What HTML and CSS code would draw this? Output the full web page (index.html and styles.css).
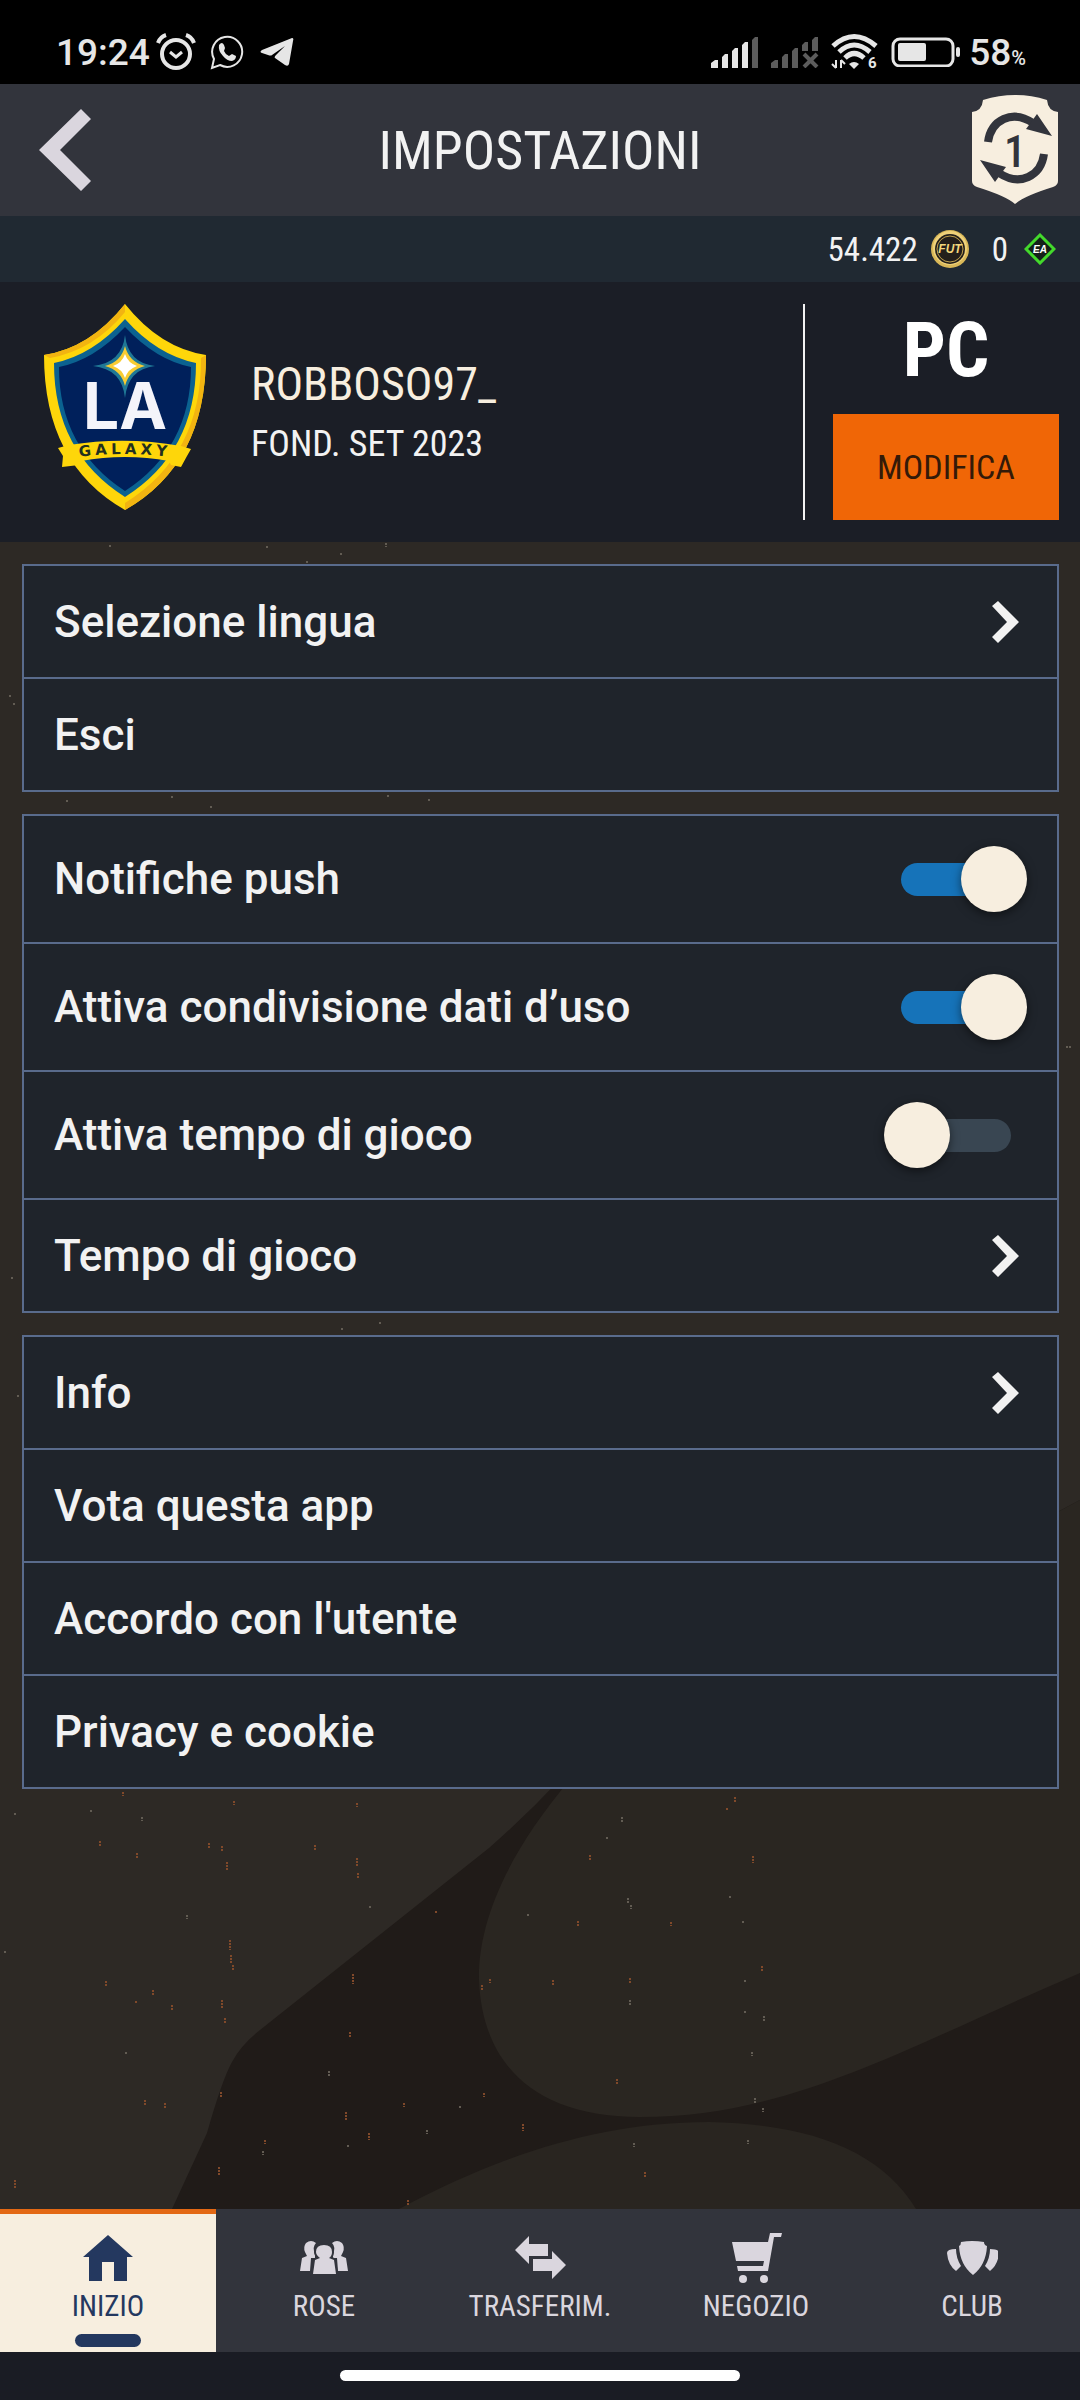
FILE: index.html
```html
<!DOCTYPE html>
<html lang="it">
<head>
  <meta charset="UTF-8">
  <meta name="viewport" content="width=device-width, initial-scale=1">
  <title>Impostazioni</title>
  <link rel="stylesheet" href="styles.css">
</head>
<body>
  <div class="statusbar">
    <span class="time">19:24</span>
    <svg class="st-alarm" width="40" height="38" viewBox="0 0 40 38" fill="none" stroke="#e6e6e6">
      <circle cx="20" cy="21" r="14" stroke-width="4"/>
      <path d="M14 19l6 5 6-5" stroke-width="3"/>
      <path d="M2 10Q4 4 10 2M38 10Q36 4 30 2" stroke-width="4"/>
    </svg>
    <svg class="st-whatsapp" width="34" height="36" viewBox="0 0 34 36">
      <path d="M2 34l2-9A15 15 0 1 1 10 31z" fill="none" stroke="#e6e6e6" stroke-width="2"/>
      <path d="M9 11q3-4 5 0l1 3-1 3q1 3 5 5l3-2 4 2q0 4-4 5-5 0-9-5-5-5-4-11z" fill="#e6e6e6"/>
    </svg>
    <svg class="st-telegram" width="34" height="30" viewBox="0 0 34 30">
      <path d="M2 13L32 1q2 0 1 3l-4 23q-1 3-4 1L15 21q-1-1 1-3l9-9-13 9q-1 1-4 0l-6-2q-3-1 0-3z" fill="#e6e6e6"/>
    </svg>
    <div class="status-right">
      <svg class="st-signal" width="48" height="32" viewBox="0 0 48 32" fill="#e6e6e6">
        <path d="M0 32v-5l4-3h3v8zM11 32V21l3-3h3v14zM21 32V15l3-3h3v20zM31 32V9l3-3h3v26z"/>
        <path d="M41 32V4l3-3h3v31z" fill="#5c5c5c"/>
      </svg>
      <svg class="st-signal2" width="48" height="32" viewBox="0 0 48 32" fill="#5c5c5c">
        <path d="M0 32v-5l4-3h3v8zM11 32V21l3-3h3v14zM21 32V15l3-3h3v20zM31 15V9l3-3h3v9zM41 15V4l3-3h3v14z"/>
        <path d="M33 18l13 13M46 18L33 31" stroke="#5c5c5c" stroke-width="4"/>
      </svg>
      <svg class="st-wifi" width="48" height="40" viewBox="0 -2 48 40">
        <g fill="none" stroke="#e6e6e6" stroke-width="5">
          <path d="M2 12Q23-7 45 12"/>
          <path d="M8 18Q23 4 39 18"/>
          <path d="M14 24Q23 15 33 24"/>
        </g>
        <path d="M18 30q5-4 10 0l-5 5z" fill="#e6e6e6"/>
        <path d="M5 26v8M1 30l4 4M10 34v-8M14 30l-4-4" stroke="#e6e6e6" stroke-width="2" fill="none"/>
        <text class="wifi-num" x="37" y="34">6</text>
      </svg>
      <svg class="st-battery" width="70" height="30" viewBox="0 0 70 30">
        <rect x="2" y="2" width="60" height="27" rx="7" fill="none" stroke="#e6e6e6" stroke-width="3"/>
        <rect x="7" y="6" width="28" height="18" rx="2" fill="#e6e6e6"/>
        <rect x="65" y="10" width="4" height="10" rx="2" fill="#e6e6e6"/>
      </svg>
      <span class="battery-text">58<small>%</small></span>
    </div>
  </div>

  <header class="topbar">
    <button class="icon-btn" type="button" aria-label="Indietro">
      <svg width="52" height="82" viewBox="0 0 52 82"><path d="M42 0l10 10-31 31 31 31-10 10L0 41z" fill="#dad6de"/></svg>
    </button>
    <h1>IMPOSTAZIONI</h1>
    <button class="icon-btn" type="button" aria-label="Rotazioni">
      <svg width="86" height="110" viewBox="0 0 86 110">
        <path d="M11 5Q43-5 75 5 76 16 86 17V86Q86 90 81 92 52 101 43 109 34 101 5 92 0 90 0 86V17Q10 16 11 5z" fill="#f7eedf"/>
        <g id="arrow">
          <path d="M16 47C19 25 40 14 61 28" fill="none" stroke="#32343c" stroke-width="8"/>
          <path d="M65 19l15 22-26-7 3-4z" fill="#32343c"/>
        </g>
        <use href="#arrow" transform="rotate(180 44 53)"/>
        <text class="badge-num" x="43" y="72">1</text>
      </svg>
    </button>
  </header>

  <div class="wallet">
    <span>54.422</span>
    <svg width="40" height="40" viewBox="0 0 40 40">
      <circle cx="20" cy="20" r="19" fill="#d9b858"/>
      <circle cx="20" cy="19" r="17" fill="#efd27a"/>
      <circle cx="20" cy="20" r="15" fill="#231f1b"/>
      <circle cx="20" cy="20" r="13" fill="none" stroke="#bfa04d" stroke-width="1"/>
      <text class="coin-text" x="20" y="24">FUT</text>
    </svg>
    <span class="points">0</span>
    <svg width="32" height="32" viewBox="0 0 32 32">
      <path d="M16 2l14 14-14 14L2 16z" fill="#14201a" stroke="#43d92c" stroke-width="3"/>
      <text class="points-text" x="16" y="20">EA</text>
    </svg>
  </div>

  <section class="profile">
    <svg class="crest" width="162" height="206" viewBox="0 0 162 206">
      <path d="M81 0Q116 44 162 51 162 160 81 206 0 160 0 51 46 44 81 0z" fill="#fed60a"/>
      <path d="M81 0Q46 44 0 51l6 3Q50 46 81 8zM162 51q0 109-81 155v-7q77-48 76-145z" fill="#f2b411"/>
      <path d="M81 15Q113 51 152 59 152 148 81 193 10 148 10 59 49 51 81 15z" fill="#0b6290"/>
      <path d="M81 23Q112 56 147 63 147 144 81 187 15 144 15 63 50 56 81 23z" fill="#00205b"/>
      <path d="M81 31Q84 59 111 62 84 65 81 94 78 65 49 62 78 59 81 31z" fill="#1f7896"/>
      <path d="M81 42Q85 58 101 62 85 66 81 82 77 66 61 62 77 58 81 42z" fill="#f8cc32"/>
      <path d="M81 50Q84 59 93 62 84 65 81 74 78 65 69 62 78 59 81 50z" fill="#fff"/>
      <text class="crest-la" x="81" y="125">LA</text>
      <path d="M25 141l-11 3 5 8-1 11 17-2 2-4q44-8 88 0l2 4 10 2 6-11 4-7-10-3q-56-10-112-1z" fill="#fed60a"/>
      <path id="ribbon" d="M20 155Q81 145 142 155" fill="none"/>
      <text class="crest-galaxy"><textPath href="#ribbon" startOffset="50%">GALAXY</textPath></text>
    </svg>
    <div class="who">
      <h2>ROBBOSO97_</h2>
      <p>FOND. SET 2023</p>
    </div>
    <div class="platform">
      <strong>PC</strong>
      <button class="edit" type="button">MODIFICA</button>
    </div>
  </section>

  <main>
    <svg class="backdrop" viewBox="0 542 1080 1667" preserveAspectRatio="xMidYMax slice" aria-hidden="true">
      <path fill="#201b18" d="M565 1774Q530 1812 489 1848L260 2030Q241 2045 232 2062 222 2080 207 2133L172 2209H1080V1500z"/>
      <path fill="#2a2621" d="M575 1774C500 1860 478 1930 479 1980 482 2060 530 2117 640 2117 790 2117 900 2050 1080 1973V1500z"/>
      <path fill="#292520" d="M399 2209C500 2155 600 2122 709 2122 810 2124 880 2150 916 2209z"/>
      <!-- paint specks -->
      <path class="specks warm" d="M123 1792v4M234 1801v4M357 1803v4M100 1841v6M137 1853v6M222 1846v5M227 1862v9M209 1843v5M315 1845v5M357 1858v8M358 1873v5M735 1797v6M727 1808v3M590 1855v6M753 1856v7M230 1940v10M231 1955v8M233 1965v6M106 1981v5M153 1990v5M172 2005v5M136 2001v3M353 1974v10M482 1985v6M490 1979v4M553 1980v5M630 1978v5M762 1966v5M222 2000v8M225 2018v6M350 2032v6M346 2112v8M369 2133v7M219 2167v9M221 2092v6M617 2079v5M645 2172v6M165 2103v6M145 2100v5M484 2093v4M523 2124v7M15 2180v8M408 2200v5M436 1911v3M578 1921v5M671 1922v4M265 2140v4M404 2103v4"/>
      <path class="specks pale" d="M15 1813v3M91 1810v3M142 1817v4M622 1817v5M607 1837v3M628 1898v5M631 1905v4M370 1906v3M187 1915v4M528 1914v3M743 1921v3M730 1896v3M630 2000v5M745 1980v3M764 2016v5M745 2011v3M329 2071v6M460 2106v3M634 2143v4M748 2140v4M755 2098v6M763 2108v4M427 2130v4M263 2151v4M348 2145v3M752 2052v4M126 2052v3M5 1951v3M110 545v3M267 546v3M386 543v4M341 553v3M307 561v3M67 800v3M172 796v3M211 806v3M388 795v3M429 799v3M10 695v3M14 703v3M1066 1047h6M12 1277v3M342 1328v3M380 1322v3M18 1395v3"/>
    </svg>

    <ul class="group">
      <li><a class="row" href="#lingua">Selezione lingua <svg class="chev" width="44" height="44" viewBox="0 0 44 44"><path d="M9 6l6-5 21 21-21 21-6-6 15-15z"/></svg></a></li>
      <li><a class="row" href="#esci">Esci</a></li>
    </ul>

    <ul class="group">
      <li><label class="row toggle" for="push">Notifiche push <input class="switch" type="checkbox" role="switch" id="push" checked></label></li>
      <li><label class="row toggle" for="dati">Attiva condivisione dati d’uso <input class="switch" type="checkbox" role="switch" id="dati" checked></label></li>
      <li><label class="row toggle" for="tempo">Attiva tempo di gioco <input class="switch" type="checkbox" role="switch" id="tempo"></label></li>
      <li><a class="row" href="#tempo-di-gioco">Tempo di gioco <svg class="chev" width="44" height="44" viewBox="0 0 44 44"><path d="M9 6l6-5 21 21-21 21-6-6 15-15z"/></svg></a></li>
    </ul>

    <ul class="group">
      <li><a class="row" href="#info">Info <svg class="chev" width="44" height="44" viewBox="0 0 44 44"><path d="M9 6l6-5 21 21-21 21-6-6 15-15z"/></svg></a></li>
      <li><a class="row" href="#vota">Vota questa app</a></li>
      <li><a class="row" href="#accordo">Accordo con l'utente</a></li>
      <li><a class="row" href="#privacy">Privacy e cookie</a></li>
    </ul>
  </main>

  <nav class="tabs">
    <a class="tab active" href="#inizio">
      <svg width="52" height="52" viewBox="0 0 52 52"><path d="M26 3l25 22h-6v24H32V30H20v19H7V25H1z"/></svg>
      INIZIO
    </a>
    <a class="tab" href="#rose">
      <svg width="52" height="52" viewBox="0 0 52 52">
        <path d="M18 11q-5-4-10 0-3 4-1 9l2 4-5 2-2 13h10l1-13h4v-4q-3-7 1-11zM34 11q5-4 10 0 3 4 1 9l-2 4 5 2 2 13H40l-1-13h-4v-4q3-7-1-11z"/>
        <path class="front" d="M26 13q8 0 8 7 0 4-3 6l5 2 2 14H15l2-14 5-2q-4-3-4-6 0-7 8-7z"/>
      </svg>
      ROSE
    </a>
    <a class="tab" href="#trasferimenti">
      <svg width="52" height="52" viewBox="0 0 52 52"><path d="M1 18L15 4v8h19v12H15v8zM19 27h19v-8l14 14-14 14v-8H19z"/></svg>
      TRASFERIM.
    </a>
    <a class="tab" href="#negozio">
      <svg width="52" height="52" viewBox="0 0 52 52"><path d="M2 10h36l2-9h12l-1 4h-7l-6 34H8l-1-5h26l1-5H6z"/><circle cx="13" cy="47" r="4"/><circle cx="34" cy="47" r="4"/></svg>
      NEGOZIO
    </a>
    <a class="tab" href="#club">
      <svg width="52" height="52" viewBox="0 0 52 52"><path d="M15 10q11-2 23 0 0 3 3 4-1 19-14 29-13-10-14-29 2-1 2-4zM1 21q0-4 9-4 0 9 5 17l-5 5Q2 33 1 21zM53 21q0-4-9-4 0 9-5 17l5 5q8-6 9-18z"/></svg>
      CLUB
    </a>
  </nav>
  <div class="gesture"><span></span></div>
</body>
</html>
```
FILE: styles.css
```css
* {
  box-sizing: border-box;
}

body {
  margin: 0;
  min-height: 100vh;
  display: flex;
  flex-direction: column;
  background: #1a1c24;
  color: #f2f2f2;
  font-family: "Roboto Condensed", "Liberation Sans Narrow", "Liberation Sans", sans-serif;
}

svg {
  display: block;
  flex: none;
}

a {
  color: inherit;
  text-decoration: none;
}

button {
  border: 0;
  padding: 0;
  background: none;
  font-family: inherit;
  cursor: pointer;
}

/* phone status bar */
.statusbar {
  display: flex;
  align-items: center;
  height: 84px;
  padding: 20px 54px 0 56px;
  background: #000;
  color: #e6e6e6;
  font-family: Roboto, sans-serif;
}

.time,
.battery-text {
  font-size: 37px;
  font-weight: 500;
}

.battery-text small {
  font-size: 20px;
}

.st-alarm {
  margin-left: 6px;
}

.st-whatsapp {
  margin-left: 14px;
}

.st-telegram {
  margin-left: 16px;
}

.status-right {
  display: flex;
  align-items: center;
  gap: 12px;
  margin-left: auto;
}

.st-battery {
  margin-right: -4px;
}

.wifi-num {
  font-size: 15px;
  font-weight: 700;
  fill: #e6e6e6;
}

/* header */
.topbar {
  display: flex;
  align-items: center;
  justify-content: space-between;
  height: 132px;
  padding: 0 22px;
  background: #32343c;
}

.topbar h1 {
  margin: 0;
  font-size: 54px;
  font-weight: 400;
}

.icon-btn {
  display: flex;
  justify-content: center;
  width: 86px;
}

.badge-num {
  font-size: 44px;
  font-weight: 500;
  text-anchor: middle;
  fill: #32343c;
}

.wallet {
  display: flex;
  align-items: center;
  justify-content: flex-end;
  gap: 12px;
  height: 66px;
  padding: 0 24px;
  background: #202932;
  font-size: 33px;
}

.points {
  margin: 0 4px 0 10px;
}

.coin-text {
  font: italic 700 12px "Liberation Sans", sans-serif;
  text-anchor: middle;
  fill: #f3d87c;
}

.points-text {
  font: italic 700 10px "Liberation Sans", sans-serif;
  text-anchor: middle;
  fill: #fff;
}

/* profile */
.profile {
  display: flex;
  min-height: 260px;
  padding: 22px 21px 22px 22px;
  background: #1b1e26;
}

.crest {
  margin: 0 45px 0 22px;
}

.crest-la {
  font: 700 64px Inter, sans-serif;
  text-anchor: middle;
  fill: #f4f4fa;
}

.crest-galaxy {
  font: 700 15px "DejaVu Sans", sans-serif;
  letter-spacing: 4px;
  text-anchor: middle;
  fill: #22301f;
}

.who {
  flex: 1;
  padding-top: 50px;
}

.who h2 {
  margin: 0;
  font-size: 46px;
  line-height: 60px;
  font-weight: 400;
  color: #f7eedf;
}

.who p {
  margin: 0;
  font-size: 36px;
  line-height: 60px;
}

.platform {
  display: flex;
  flex-direction: column;
  align-items: center;
  justify-content: space-between;
  padding-left: 28px;
  border-left: 2px solid #f2f2f2;
}

.platform strong {
  font-size: 76px;
  line-height: 92px;
  color: #fff;
}

.edit {
  width: 226px;
  height: 106px;
  background: #f06606;
  color: #341a08;
  font-size: 34px;
}

/* settings lists */
main {
  flex: 1;
  position: relative;
  padding: 22px 21px 0 22px;
  background: #2d2925;
  overflow: hidden;
}

.backdrop {
  position: absolute;
  inset: 0;
  width: 100%;
  height: 100%;
}

.specks {
  fill: none;
  stroke-width: 2;
  stroke-dasharray: 2 1;
}

.warm {
  stroke: #80492a;
}

.pale {
  stroke: #625c53;
}

.group {
  position: relative;
  list-style: none;
  margin: 0 0 22px;
  padding: 0;
  border: 2px solid #596b8c;
  border-bottom: 0;
  background: #1f242b;
  font-family: Roboto, sans-serif;
  font-size: 44px;
  font-weight: 500;
}

.row {
  display: flex;
  align-items: center;
  justify-content: space-between;
  min-height: 113px;
  padding: 0 30px;
  border-bottom: 2px solid #596b8c;
}

.toggle {
  min-height: 128px;
}

.chev {
  fill: #f2f2f2;
}

.switch {
  appearance: none;
  position: relative;
  display: flex;
  align-items: center;
  width: 143px;
  height: 66px;
  margin: 0;
  cursor: pointer;
}

/* track */
.switch::before {
  content: "";
  position: absolute;
  left: 17px;
  width: 110px;
  height: 33px;
  border-radius: 17px;
  background: #394652;
}

/* knob */
.switch::after {
  content: "";
  position: relative;
  width: 66px;
  height: 66px;
  border-radius: 50%;
  background: #f7eedf;
  box-shadow: 0 3px 10px rgba(0, 0, 0, 0.5);
}

.switch:checked::before {
  background: #1673b9;
}

.switch:checked::after {
  margin-left: auto;
}

/* bottom tabs */
.tabs {
  display: grid;
  grid-template-columns: repeat(5, 1fr);
  height: 143px;
  background: #32343c;
}

.tab {
  display: flex;
  flex-direction: column;
  align-items: center;
  gap: 4px;
  padding-top: 18px;
  border-top: 5px solid transparent;
  color: #dad6de;
  font-size: 29px;
  line-height: 36px;
}

.tab svg {
  fill: currentColor;
}

/* gap between the front figure and the two behind it */
.front {
  stroke: #32343c;
  stroke-width: 4;
  paint-order: stroke;
}

.tab.active {
  background: #f7eedf;
  border-top-color: #e36814;
  color: #24385f;
}

.tab.active::after {
  content: "";
  width: 66px;
  height: 13px;
  margin-top: 6px;
  border-radius: 7px;
  background: #24385f;
}

.gesture {
  display: flex;
  justify-content: center;
  height: 48px;
  padding-top: 18px;
}

.gesture span {
  width: 400px;
  height: 11px;
  border-radius: 6px;
  background: #fff;
}
```
